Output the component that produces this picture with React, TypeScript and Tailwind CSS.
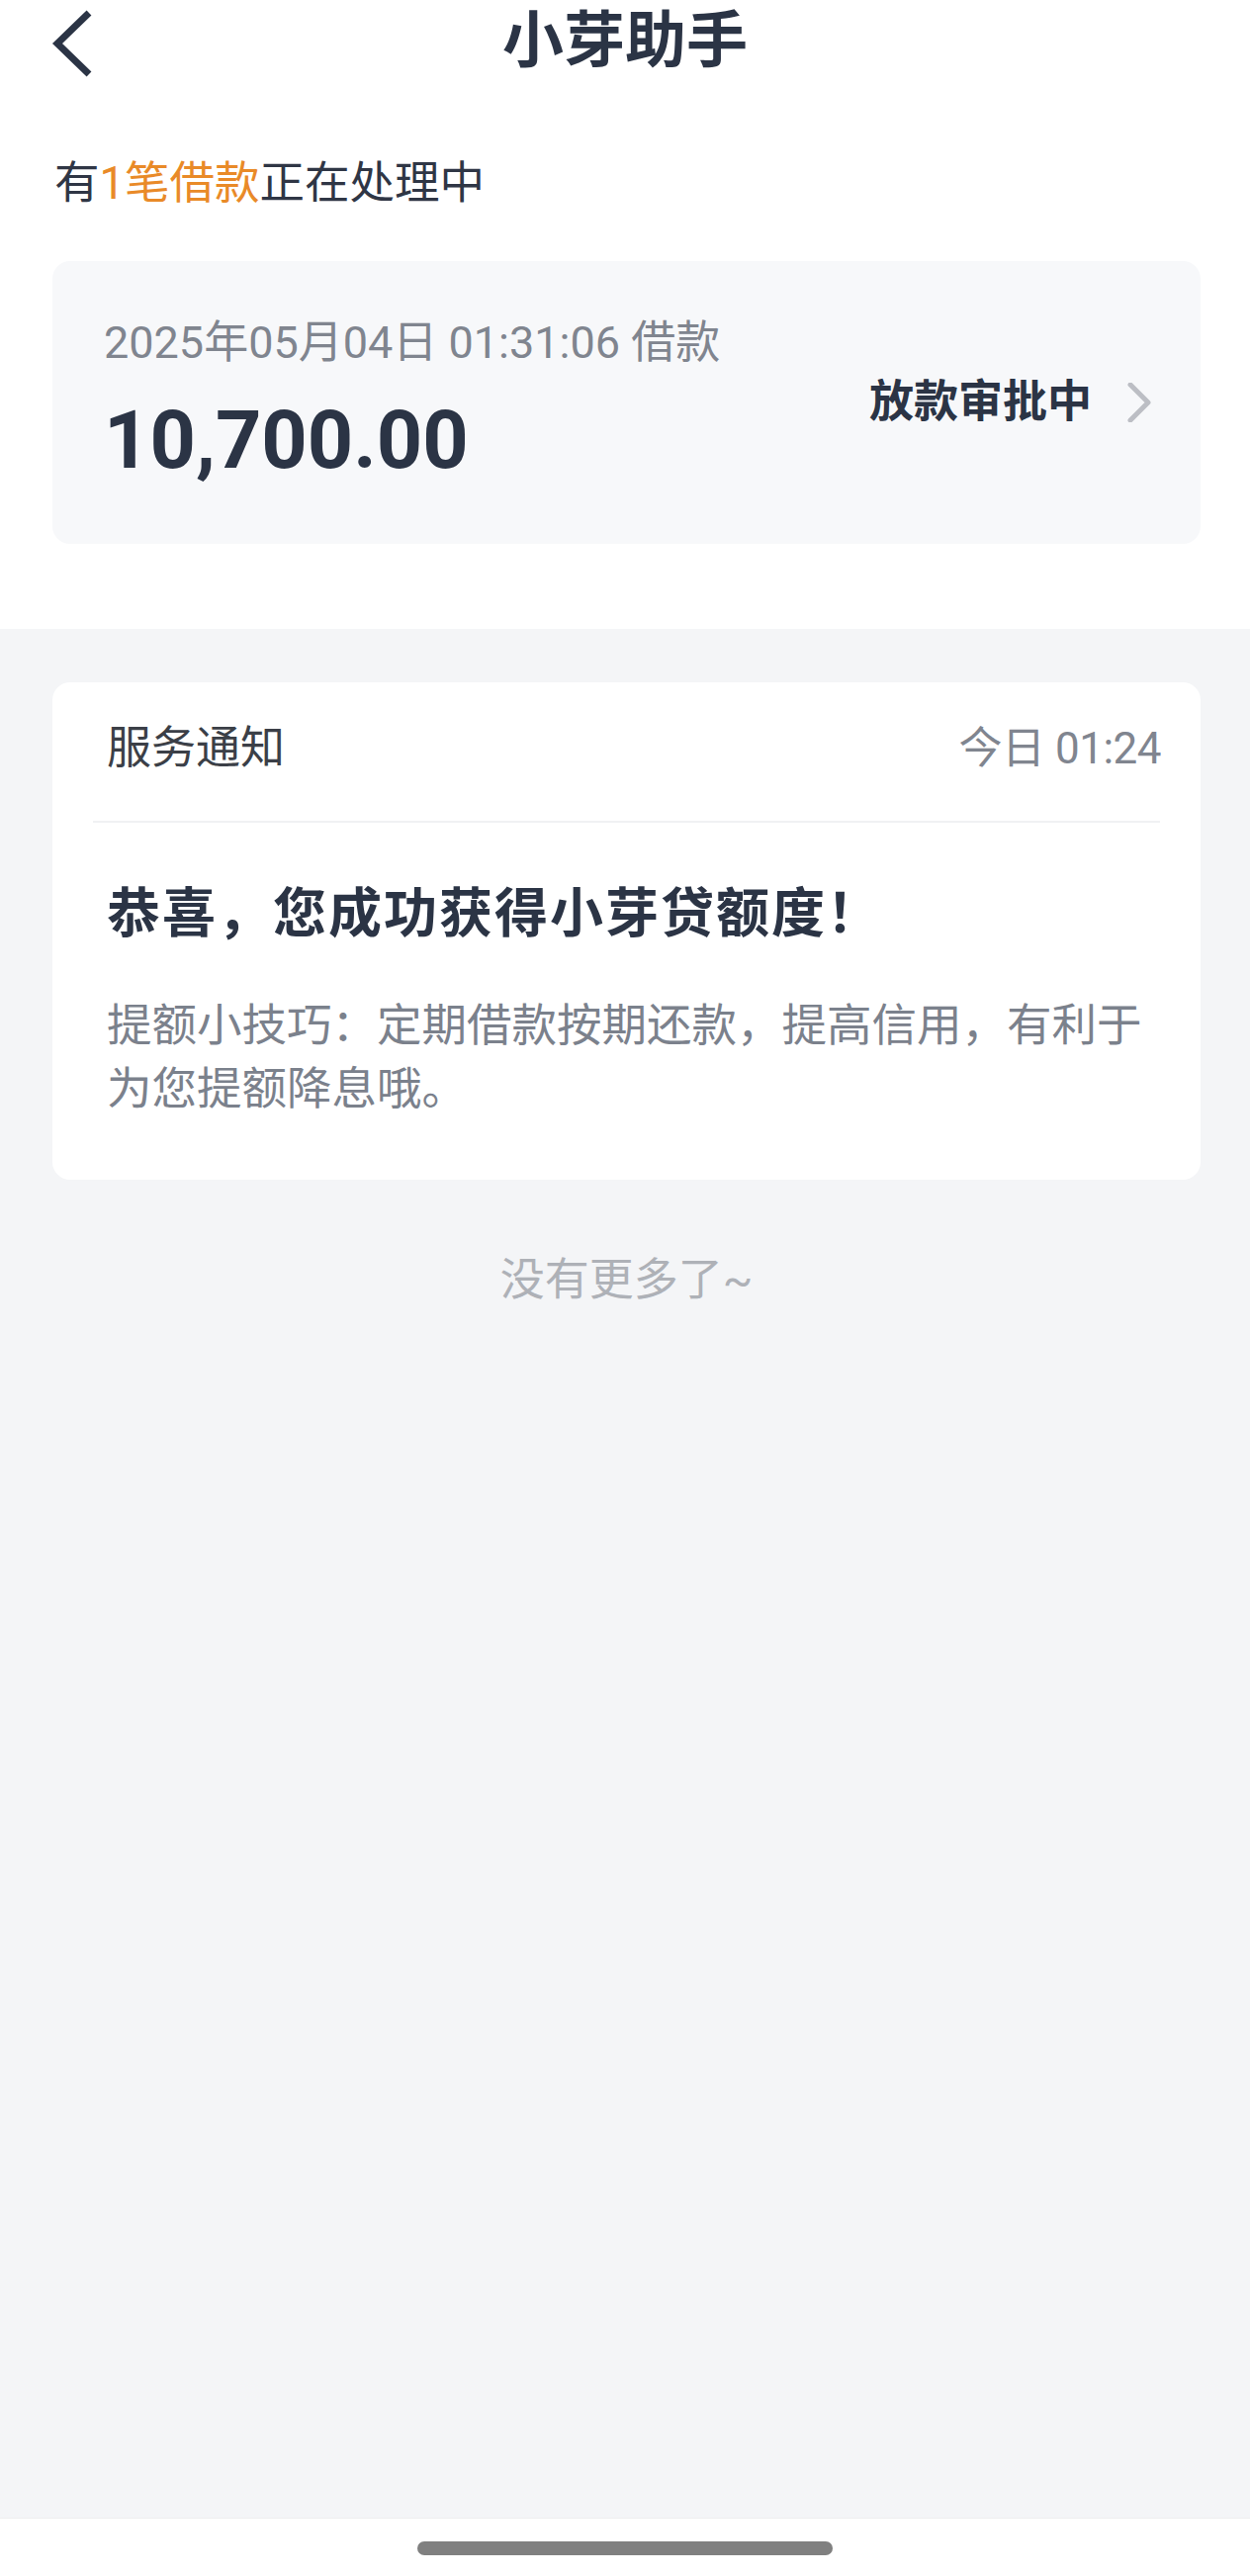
import { ReactNode } from 'react';

const FONT = "font-['Roboto','Noto_Sans_CJK_SC',sans-serif]";

const BackIcon = () => (
  <svg width="44" height="72" viewBox="0 0 44 72" fill="none">
    <path
      d="M38 6 L6 37 L38 68"
      stroke="#2b3445"
      strokeWidth="7"
      strokeLinejoin="miter"
    />
  </svg>
);

const ChevronRight = () => (
  <svg width="24" height="40" viewBox="0 0 24 40" fill="none">
    <path
      d="M3 2 L21 20 L3 38"
      stroke="#bcbec4"
      strokeWidth="5"
      strokeLinecap="round"
      strokeLinejoin="round"
    />
  </svg>
);

const Header = () => (
  <div className="grid h-[84px] grid-cols-[1fr_auto_1fr] items-center">
    <div className="flex items-center pl-[52px] pt-[2px]">
      <BackIcon />
    </div>
    <h1 className="text-[62px] leading-[84px] font-bold text-[#2b3445]">
      小芽助手
    </h1>
    <div />
  </div>
);

const LoanCard = () => (
  <div className="flex items-center justify-between rounded-[18px] bg-[#f7f8fa] pl-[52px] pr-[50px]">
    <div className="flex flex-col pt-[55px] pb-[59px]">
      <span className="text-[45px] leading-[56px] text-[#80858f]">
        2025年05月04日 01:31:06 借款
      </span>
      <span className="mt-[26px] text-[81px] leading-[90px] font-bold text-[#2b3445]">
        10,700.00
      </span>
    </div>
    <div className="flex items-center gap-[36px]">
      <span className="text-[45px] leading-[60px] font-bold text-[#2b3445]">
        放款审批中
      </span>
      <ChevronRight />
    </div>
  </div>
);

const NoticeCard = ({
  label,
  time,
  title,
  children,
}: {
  label: string;
  time: string;
  title: string;
  children: ReactNode;
}) => (
  <div className="rounded-[18px] bg-white">
    <div className="flex items-center justify-between pt-[37px] pb-[43px] pl-[55px] pr-[40px]">
      <span className="text-[45px] leading-[60px] text-[#3b3f47]">{label}</span>
      <span className="text-[44px] leading-[60px] tracking-[-0.5px] text-[#80858f]">
        {time}
      </span>
    </div>
    <div className="mx-[41px] h-[2px] bg-[#f0f1f3]" />
    <div className="pt-[58px] pb-[59px] pl-[55px] pr-[36px]">
      <h2 className="text-[54px] leading-[70px] tracking-[2px] font-bold text-[#2b3445]">
        {title}
      </h2>
      <p className="mt-[46px] text-[45.5px] leading-[64px] text-[#7b818c]">
        {children}
      </p>
    </div>
  </div>
);

const App = () => {
  return (
    <div className={`${FONT} flex min-h-[2605px] w-full flex-col bg-white`}>
      <div className="bg-white pb-[86px]">
        <Header />

        <p className="mt-[72px] pl-[55px] text-[45.5px] leading-[60px] text-[#2f3645]">
          有<span className="text-[#e98a28]">1笔借款</span>正在处理中
        </p>

        <div className="mt-[48px] pl-[53px] pr-[50px]">
          <LoanCard />
        </div>
      </div>

      <div className="flex flex-1 flex-col bg-[#f4f5f7] pl-[53px] pr-[50px] pt-[54px]">
        <NoticeCard label="服务通知" time="今日 01:24" title="恭喜，您成功获得小芽贷额度！">
          提额小技巧：定期借款按期还款，提高信用，有利于为您提额降息哦。
        </NoticeCard>

        <p className="mt-[72px] text-center text-[45px] leading-[60px] text-[#aeb1b7]">
          没有更多了~
        </p>
      </div>

      <div className="flex h-[59px] items-center justify-center border-t border-[#eeeeee] bg-white">
        <div className="mt-[2px] h-[14px] w-[420px] rounded-full bg-[#808080]" />
      </div>
    </div>
  );
};

export default App;
